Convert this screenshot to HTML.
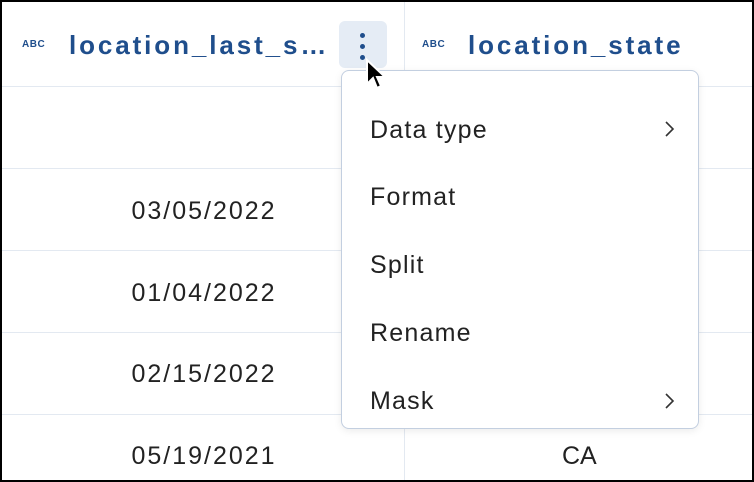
<!DOCTYPE html><html><head><style>
body{margin:0;width:754px;height:482px;overflow:hidden;font-family:"Liberation Sans",sans-serif;background:#fff;position:relative}
.frame{position:absolute;left:0;top:0;width:750px;height:478px;border:2px solid #000;overflow:hidden}
.h{position:absolute;height:1px;background:#e3e9f1;left:0;right:0}
.v{position:absolute;width:1px;background:#e3e9f1;top:0;bottom:0;left:402px}
.abc{position:absolute;font-size:10px;font-weight:bold;color:#1f4e8c;letter-spacing:.5px}
.ht{position:absolute;font-size:26px;font-weight:bold;color:#1f4e8c;letter-spacing:2.9px}
.d{position:absolute;left:0;width:404px;text-align:center;font-size:25px;color:#222;letter-spacing:2px}
.menu{position:absolute;left:339px;top:68px;width:356px;height:357px;border:1.5px solid #c3cfe0;border-radius:8px;background:#fff;box-shadow:0 2px 8px rgba(0,0,0,.08)}
.it{position:absolute;left:28px;font-size:25px;color:#222;letter-spacing:1.2px}
.ch{position:absolute;right:22px}
</style></head><body><div class="frame">
<div class="h" style="top:84px"></div><div class="h" style="top:166px"></div><div class="h" style="top:248px"></div><div class="h" style="top:330px"></div><div class="h" style="top:412px"></div>
<div class="v"></div>
<div class="abc" style="left:20px;top:37px">ABC</div>
<div class="ht" style="left:67px;top:28px">location_last_s…</div>
<div style="position:absolute;left:337px;top:19px;width:48px;height:47px;background:#e5ecf5;border-radius:6px"></div>
<div style="position:absolute;left:358px;top:31px;width:5px;height:5px;border-radius:50%;background:#1f4e8c"></div>
<div style="position:absolute;left:358px;top:42px;width:5px;height:5px;border-radius:50%;background:#1f4e8c"></div>
<div style="position:absolute;left:358px;top:53px;width:5px;height:5px;border-radius:50%;background:#1f4e8c"></div>
<div class="abc" style="left:420px;top:37px">ABC</div>
<div class="ht" style="left:466px;top:28px">location_state</div>
<div class="d" style="top:195px">03/05/2022</div>
<div class="d" style="top:277px">01/04/2022</div>
<div class="d" style="top:358px">02/15/2022</div>
<div class="d" style="top:440px">05/19/2021</div>
<div style="position:absolute;left:560px;top:440px;font-size:25px;color:#222">CA</div>
<div class="menu">
<div class="it" style="top:45px">Data type</div><svg class="ch" style="top:50px" width="12" height="16"><path d="M2 1 L9 8 L2 15" fill="none" stroke="#333" stroke-width="1.6"/></svg>
<div class="it" style="top:112px">Format</div>
<div class="it" style="top:180px">Split</div>
<div class="it" style="top:248px">Rename</div>
<div class="it" style="top:316px">Mask</div><svg class="ch" style="top:322px" width="12" height="16"><path d="M2 1 L9 8 L2 15" fill="none" stroke="#333" stroke-width="1.6"/></svg>
</div>
<svg style="position:absolute;left:363px;top:56px" width="22" height="34" viewBox="0 0 22 34"><path d="M2 2 L2 26 L8 20 L12 30 L16 28 L12 19 L20 19 Z" fill="#000" stroke="#fff" stroke-width="2"/></svg>
</div></body></html>
